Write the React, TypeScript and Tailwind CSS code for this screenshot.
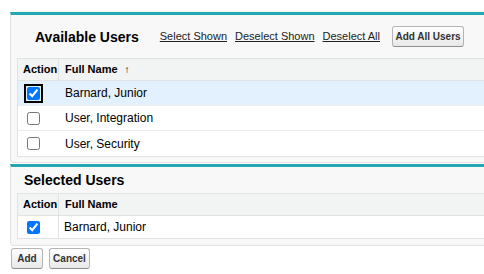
import React from 'react';

interface User {
  name: string;
  checked: boolean;
  focused?: boolean;
}

const available: User[] = [
  { name: 'Barnard, Junior', checked: true, focused: true },
  { name: 'User, Integration', checked: false },
  { name: 'User, Security', checked: false },
];

const Checkbox: React.FC<{ checked: boolean; focused?: boolean }> = ({ checked, focused }) => (
  <input
    type="checkbox"
    defaultChecked={checked}
    className={
      'm-0 w-[13px] h-[13px] block ' +
      (focused ? 'outline-2 outline-solid outline-black outline-offset-1 rounded-[2px]' : '')
    }
  />
);

const LinkText: React.FC<{ children: React.ReactNode }> = ({ children }) => (
  <a href="#" className="underline text-[11px] text-[#222] leading-none">
    {children}
  </a>
);

const Btn: React.FC<{ children: React.ReactNode; className?: string }> = ({ children, className }) => (
  <button
    className={
      'h-[21px] rounded-[3px] border border-[#b5b5b5] border-b-[#8f8f8f] bg-gradient-to-b from-white to-[#e8e8e8] text-[10px] font-bold text-[#333] leading-none ' +
      (className ?? '')
    }
  >
    {children}
  </button>
);

export default function App() {
  return (
    <div
      className="w-[484px] h-[274px] overflow-hidden bg-white text-black"
      style={{ fontFamily: '"Liberation Sans", Arial, sans-serif' }}
    >
      {/* available users block */}
      <div className="ml-[10px] mt-[12px] w-[560px] border border-t-[3px] border-[#e0e3e5] border-t-[#22a8b1] bg-[#f8f8f8] rounded-bl-[4px] pb-[5px]">
        <div className="h-[43px] flex items-center">
          <h2 className="ml-[24px] text-[14px] font-bold leading-none">Available Users</h2>
          <div className="ml-[21px] flex items-center gap-[8px]">
            <LinkText>Select Shown</LinkText>
            <LinkText>Deselect Shown</LinkText>
            <LinkText>Deselect All</LinkText>
          </div>
          <Btn className="ml-[12px] w-[72px]">Add All Users</Btn>
        </div>
        <div className="ml-[6px] border border-[#e0e3e5] bg-white">
          <div className="h-[22px] flex items-center bg-[#f2f3f3] border-b border-[#e0e3e5] text-[11px] font-bold">
            <div className="w-[41px] h-full flex items-center pl-[5px] border-r border-[#e0e3e5]">Action</div>
            <div className="pl-[6px] flex items-center">
              Full Name
              <span className="ml-[7px] text-[10px] font-bold">↑</span>
            </div>
          </div>
          {available.map((u, i) => (
            <div
              key={u.name}
              className={
                'h-[25px] flex items-center text-[12px] ' +
                (i < available.length - 1 ? 'border-b border-[#ededed] ' : '') +
                (u.focused ? 'bg-[#e3f0fd]' : '')
              }
            >
              <div className="w-[42px] pl-[9px]">
                <Checkbox checked={u.checked} focused={u.focused} />
              </div>
              <div className="pl-[5px]">{u.name}</div>
            </div>
          ))}
        </div>
      </div>

      {/* selected users block */}
      <div className="ml-[10px] mt-[1px] w-[560px] border border-t-[3px] border-[#e0e3e5] border-t-[#22a8b1] bg-[#f8f8f8] rounded-bl-[4px] pb-[6px]">
        <div className="h-[26px] flex items-center">
          <h2 className="ml-[13px] text-[14px] font-bold leading-none">Selected Users</h2>
        </div>
        <div className="ml-[6px] border border-[#e0e3e5] bg-white">
          <div className="h-[22px] flex items-center bg-[#f2f3f3] border-b border-[#e0e3e5] text-[11px] font-bold">
            <div className="w-[41px] h-full flex items-center pl-[5px] border-r border-[#e0e3e5]">Action</div>
            <div className="pl-[6px]">Full Name</div>
          </div>
          <div className="h-[22px] flex items-center text-[12px]">
            <div className="w-[41px] h-full flex items-center pl-[9px] border-r border-[#e0e3e5]">
              <Checkbox checked />
            </div>
            <div className="pl-[5px]">Barnard, Junior</div>
          </div>
        </div>
      </div>

      <div className="ml-[11px] mt-[2px] flex gap-[6px]">
        <Btn className="w-[32px]">Add</Btn>
        <Btn className="w-[41px]">Cancel</Btn>
      </div>
    </div>
  );
}
